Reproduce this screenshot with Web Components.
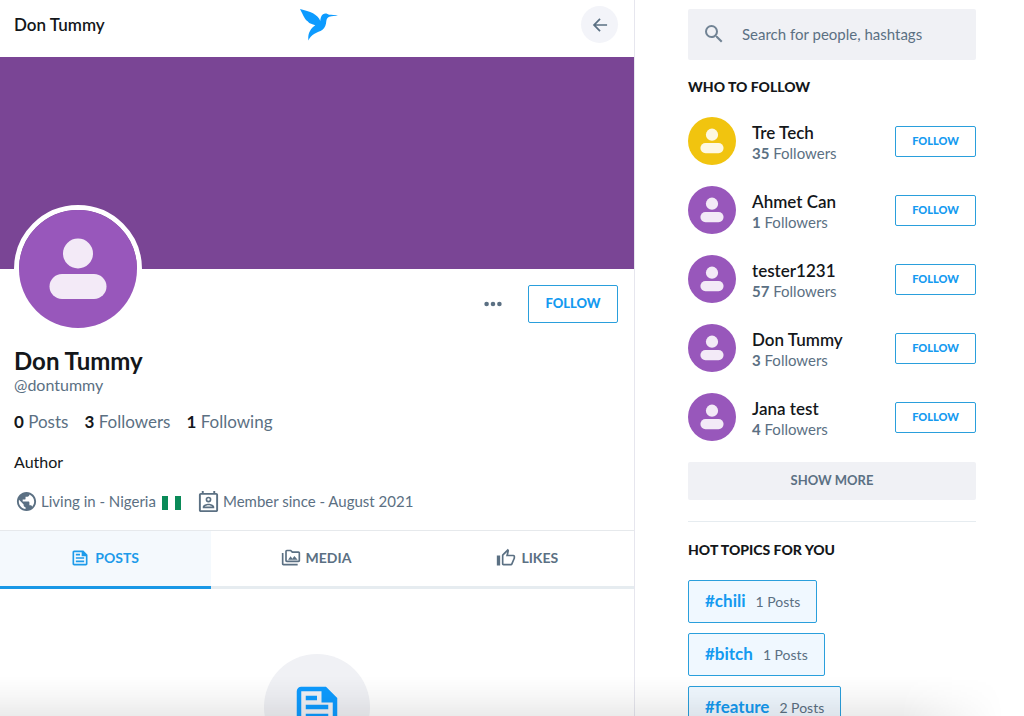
<!DOCTYPE html>
<html lang="en">
<head>
<meta charset="utf-8">
<title>Don Tummy</title>
<style>
  body { margin: 0; background: #fff; }
</style>
</head>
<body>
<social-app></social-app>

<script>
const PATHS = {
  back: '<path d="M20.500 11.100H7.200l5.600-5.700-1.500-1.400L3.400 12l7.900 8 1.500-1.400-5.600-5.700h13.300z"/>',
  search: '<path d="M15.500 14h-.79l-.28-.27A6.471 6.471 0 0 0 16 9.500 6.500 6.500 0 1 0 9.500 16c1.610 0 3.090-.59 4.230-1.570l.27.28v.79l5 4.990L20.490 19l-4.990-5zm-6 0C7.010 14 5 11.990 5 9.500S7.010 5 9.500 5 14 7.010 14 9.500 11.990 14 9.500 14z"/>',
  more: '<circle cx="5" cy="12" r="2.500"/><circle cx="12" cy="12" r="2.500"/><circle cx="19" cy="12" r="2.500"/>',
  globe: '<path d="M12 2C6.480 2 2 6.480 2 12s4.480 10 10 10 10-4.480 10-10S17.520 2 12 2zm-1 17.930c-3.950-.49-7-3.850-7-7.930 0-.62.08-1.210.21-1.790L9 15v1c0 1.100.9 2 2 2v1.930zm6.900-2.540c-.26-.81-1-1.390-1.900-1.390h-1v-3c0-.55-.45-1-1-1H8v-2h2c.55 0 1-.45 1-1V7h2c1.100 0 2-.9 2-2v-.41c2.930 1.190 5 4.060 5 7.410 0 2.080-.8 3.970-2.100 5.390z"/>',
  member: '<path d="M20 3h-1V1h-2v2H7V1H5v2H4c-1.100 0-2 .9-2 2v16c0 1.100.9 2 2 2h16c1.100 0 2-.9 2-2V5c0-1.100-.9-2-2-2zm0 18H4V5h16z"/><path d="M12 7a3 3 0 1 0 0 6 3 3 0 0 0 0-6zm0 4.300a1.300 1.300 0 1 1 0-2.600 1.300 1.300 0 0 1 0 2.600zM18 17.600c0-2.200-4-3.300-6-3.300s-6 1.100-6 3.300V19h12zm-9.900-.3c.6-.6 2.500-1.300 3.900-1.300s3.300.7 3.900 1.300z"/>',
  feed: '<path d="M16 3H5c-1.100 0-2 .9-2 2v14c0 1.100.9 2 2 2h14c1.100 0 2-.9 2-2V8l-5-5zm3 16H5V5h9v5h5v9zM7 17h10v-2H7v2zm5-10H7v2h5V7zm-5 6h10v-2H7v2z"/>',
  media: '<path d="M3 6H1v13c0 1.100.9 2 2 2h17v-2H3V6z"/><path d="M21 4h-7l-2-2H7c-1.100 0-1.990.9-1.990 2L5 15c0 1.100.9 2 2 2h14c1.100 0 2-.9 2-2V6c0-1.100-.9-2-2-2zm0 11H7V4h4.170l2 2H21v9z"/><path d="M8.500 14l3-4 2.200 2.800L16 9.500l4 4.500z"/>',
  like: '<path d="M9 21h9c.83 0 1.540-.5 1.840-1.220l3.020-7.050c.09-.23.14-.47.14-.73v-2c0-1.100-.9-2-2-2h-6.310l.95-4.570.03-.32c0-.41-.17-.79-.44-1.060L14.170 1 7.580 7.590C7.220 7.950 7 8.450 7 9v10c0 1.100.9 2 2 2zM9 9l4.340-4.340L12 10h9v2l-3 7H9V9zM1 9h4v12H1z"/>'
};

function define(name, template, setup) {
  const source = document.createElement('template');
  source.innerHTML = template;
  customElements.define(name, class extends HTMLElement {
    constructor() {
      super();
      this.attachShadow({ mode: 'open' }).append(source.content.cloneNode(true));
    }
    connectedCallback() {
      if (setup) setup(this, this.shadowRoot);
    }
  });
}

define('ui-icon', `
  <style>
    :host { display: block; flex: none; width: var(--icon-size, 24px); height: var(--icon-size, 24px); }
    svg { display: block; width: 100%; height: 100%; fill: currentColor; }
  </style>
  <svg viewBox="0 0 24 24" aria-hidden="true"></svg>`,
  (host, root) => { root.querySelector('svg').innerHTML = PATHS[host.getAttribute('name')]; });

define('bird-logo', `
  <style>
    :host { display: block; }
    a, svg { display: block; }
  </style>
  <a href="#" aria-label="Home">
    <svg width="44" height="32" viewBox="-6 0 44 32" fill="#0d9bff">
      <path d="M0 0C5 1.600 9.500 2 13 4.300c3.600 2.300 6.300 4.600 7.300 7.600.2-3 1.300-7.300 5.200-7.400 1.500 0 2.500.6 3.400 1.300 3 0 6 .2 9.300 1-3 .3-6 .3-8.900 1-2 .7-2.700 2.300-3 4.500-.3 3.700-1.200 6.400-3.800 8.500-2.500 2-5.500 2.300-8 4-2.700 1.700-4.600 3.500-6.100 6.600-.8-6.300 1.600-11.600 6.900-15.200-3-.7-5.700-1.400-7.500-3.600 .3-.2-.6-.4-1-.8C4.300 9.300 3.200 6.200 0 0z"/>
    </svg>
  </a>`);

define('user-avatar', `
  <style>
    :host { display: block; flex: none; width: 48px; height: 48px; color: #9857bb; }
    :host([tone="yellow"]) { color: #f1c40f; }
    :host([size="large"]) { width: 118px; height: 118px; border: 5px solid #fff; border-radius: 50%; }
    svg { display: block; width: 100%; height: 100%; }
  </style>
  <svg viewBox="0 0 118 118" role="img" aria-label="Profile picture">
    <circle cx="59" cy="59" r="59" fill="currentColor"/>
    <g fill="#fff" fill-opacity=".88">
      <circle cx="59" cy="43.500" r="15"/>
      <rect x="30.500" y="64" width="57" height="25" rx="12.500"/>
    </g>
  </svg>`);

define('follow-button', `
  <style>
    :host { display: block; flex: none; }
    button {
      display: block; box-sizing: border-box; width: 81px; height: 31px; padding: 0 0 1px;
      border: 1px solid #2a9fdc; border-radius: 2px; background: #fff; color: #149af0;
      font: 900 11px/16px Lato, sans-serif; cursor: pointer;
    }
    :host([size="large"]) button { width: 90px; height: 38px; font-size: 13px; padding-bottom: 2px; }
  </style>
  <button type="button">FOLLOW</button>`);

define('page-header', `
  <style>
    :host {
      display: grid; grid-template-columns: 1fr auto 1fr; align-items: center;
      box-sizing: border-box; height: 57px; padding: 0 16px 8px 14px; background: #fff;
    }
    h2 { margin: 0; font: 600 17px/24px Lato, sans-serif; }
    button {
      justify-self: end; display: grid; place-items: center; width: 37px; height: 37px; padding: 0;
      border: 0; border-radius: 50%; background: #f3f4f9; color: #5b7083; cursor: pointer;
      --icon-size: 20px;
    }
  </style>
  <h2><slot></slot></h2>
  <bird-logo></bird-logo>
  <button type="button" aria-label="Back"><ui-icon name="back"></ui-icon></button>`);

define('profile-card', `
  <style>
    :host { display: block; }
    .cover { height: 212px; background: #7a4595; }
    .body { padding: 0 16px 17px 14px; }
    .top { display: flex; align-items: flex-start; justify-content: space-between; }
    user-avatar { margin-top: -64px; position: relative; }
    .actions { display: flex; align-items: center; gap: 24px; padding-top: 16px; }
    .more { display: block; padding: 0; border: 0; background: none; color: #5b7083; cursor: pointer; --icon-size: 22px; }
    h1 { margin: 12px 0 0; font: 700 24px/32px Lato, sans-serif; }
    .handle { margin: 0; font-size: 16px; line-height: 16px; color: #5b7083; }
    .stats { display: flex; gap: 16px; margin: 17px 0 0; padding: 0; list-style: none; font-size: 17px; line-height: 24px; }
    .stats a { color: #5b7083; text-decoration: none; }
    .stats strong { color: #14171a; }
    .bio { margin: 16px 0 0; font-size: 16px; line-height: 24px; }
    .facts { display: flex; align-items: center; gap: 16px; margin-top: 15px; font-size: 15px; line-height: 24px; color: #5b7083; --icon-size: 23px; }
    .fact { display: flex; align-items: center; gap: 3px; }
    .fact:first-child { padding-left: 1px; }
    .flag { width: 19px; height: 14px; margin: 4px 0 0 3px; background: linear-gradient(90deg, #0a8a58 33%, #fff 33% 67%, #0a8a58 67%); }
  </style>
  <div class="cover"></div>
  <div class="body">
    <div class="top">
      <user-avatar size="large"></user-avatar>
      <div class="actions">
        <button class="more" type="button" aria-label="More"><ui-icon name="more"></ui-icon></button>
        <follow-button size="large"></follow-button>
      </div>
    </div>
    <h1>Don Tummy</h1>
    <p class="handle">@dontummy</p>
    <ul class="stats">
      <li><a href="#"><strong>0</strong> Posts</a></li>
      <li><a href="#"><strong>3</strong> Followers</a></li>
      <li><a href="#"><strong>1</strong> Following</a></li>
    </ul>
    <p class="bio">Author</p>
    <div class="facts">
      <div class="fact"><ui-icon name="globe"></ui-icon><span>Living in - Nigeria</span><div class="flag" role="img" aria-label="Flag of Nigeria"></div></div>
      <div class="fact"><ui-icon name="member"></ui-icon><span>Member since - August 2021</span></div>
    </div>
  </div>`);

define('tab-item', `
  <style>
    :host { display: block; flex: 1; }
    button {
      display: flex; align-items: center; justify-content: center; gap: 5px; box-sizing: border-box;
      width: 100%; height: 58px; padding: 0 2px 2px 0; border: 0; border-bottom: 3px solid #e6ecf0;
      background: #fff; color: #5b7083; font: 700 14px/20px Lato, sans-serif; cursor: pointer;
      --icon-size: 20px;
    }
    :host([active]) button { background: #f4f9fd; border-color: #1a98e6; color: #1d9bea; }
  </style>
  <button type="button" role="tab"><ui-icon></ui-icon><span><slot></slot></span></button>`,
  (host, root) => {
    const icon = root.querySelector('ui-icon');
    const fresh = document.createElement('ui-icon');
    fresh.setAttribute('name', host.getAttribute('icon'));
    icon.replaceWith(fresh);
    root.querySelector('button').setAttribute('aria-selected', host.hasAttribute('active'));
  });

define('profile-tabs', `
  <style>
    :host { display: flex; border-top: 1px solid #e6e9ec; }
  </style>
  <tab-item icon="feed" active>POSTS</tab-item>
  <tab-item icon="media">MEDIA</tab-item>
  <tab-item icon="like">LIKES</tab-item>`,
  host => host.setAttribute('role', 'tablist'));

define('empty-posts', `
  <style>
    :host { display: flex; justify-content: center; padding-top: 65px; }
    .disc {
      display: grid; place-items: center; width: 106px; height: 106px; border-radius: 50%;
      background: #f0f1f5; color: #0d9bff; --icon-size: 54px;
    }
  </style>
  <div class="disc"><ui-icon name="feed"></ui-icon></div>`);

define('search-box', `
  <style>
    :host { display: block; }
    label {
      display: flex; align-items: center; gap: 16px; box-sizing: border-box; height: 51px; padding: 0 52px 2px 14px;
      border-radius: 2px; background: #f0f1f5; color: #718394;
    }
    input {
      flex: 1; min-width: 0; padding: 0; border: 0; outline: 0; background: none;
      font: 400 15px/24px Lato, sans-serif; color: #14171a;
    }
    input::placeholder { color: #5b7083; opacity: 1; }
  </style>
  <label><ui-icon name="search"></ui-icon><input type="text" aria-label="Search" placeholder="Search for people, hashtags"></label>`);

define('follow-suggestion', `
  <style>
    :host { display: flex; align-items: center; gap: 16px; }
    .text { flex: 1; min-width: 0; padding-top: 4px; }
    .name { display: block; font: 600 17px/20px Lato, sans-serif; color: #14171a; text-decoration: none; }
    .count { font-size: 15px; line-height: 20px; color: #5b7083; }
  </style>
  <user-avatar></user-avatar>
  <div class="text"><a class="name" href="#"></a><div class="count"><strong></strong> Followers</div></div>
  <follow-button></follow-button>`,
  (host, root) => {
    root.querySelector('.name').textContent = host.getAttribute('name');
    root.querySelector('strong').textContent = host.getAttribute('followers');
    if (host.hasAttribute('tone')) root.querySelector('user-avatar').setAttribute('tone', host.getAttribute('tone'));
  });

define('side-section', `
  <style>
    :host { display: block; }
    h3 { margin: 0; font: 900 14px/20px Lato, sans-serif; }
  </style>
  <h3><slot name="title"></slot></h3>
  <slot></slot>`);

define('topic-chip', `
  <style>
    :host { display: block; }
    a {
      display: flex; align-items: baseline; gap: 10px; padding: 11px 16px;
      border: 1px solid #2a9fdc; border-radius: 2px; background: #f0f8ff; text-decoration: none;
      font-size: 14px; line-height: 18px; color: #5b7083;
    }
    strong { font-size: 17px; color: #149af0; }
  </style>
  <a href="#"><strong><slot></slot></strong><span></span></a>`,
  (host, root) => { root.querySelector('span').textContent = host.getAttribute('posts') + ' Posts'; });

define('side-bar', `
  <style>
    :host { display: block; padding-top: 9px; }
    side-section { margin-top: 17px; }
    .people { display: grid; gap: 21px; margin-top: 20px; }
    .show-more {
      display: block; width: 100%; height: 38px; margin-top: 21px; padding: 0 0 2px; border: 0; border-radius: 2px;
      background: #f0f1f5; color: #5b7083; font: 700 13px/20px Lato, sans-serif; cursor: pointer;
    }
    hr { height: 1px; margin: 21px 0 18px; border: 0; background: #e6ecf0; }
    .topics { display: flex; flex-direction: column; align-items: flex-start; gap: 10px; margin-top: 20px; }
  </style>
  <search-box></search-box>
  <side-section>
    <span slot="title">WHO TO FOLLOW</span>
    <div class="people">
      <follow-suggestion name="Tre Tech" followers="35" tone="yellow"></follow-suggestion>
      <follow-suggestion name="Ahmet Can" followers="1"></follow-suggestion>
      <follow-suggestion name="tester1231" followers="57"></follow-suggestion>
      <follow-suggestion name="Don Tummy" followers="3"></follow-suggestion>
      <follow-suggestion name="Jana test" followers="4"></follow-suggestion>
    </div>
    <button class="show-more" type="button">SHOW MORE</button>
  </side-section>
  <hr>
  <side-section>
    <span slot="title">HOT TOPICS FOR YOU</span>
    <div class="topics">
      <topic-chip posts="1">#chili</topic-chip>
      <topic-chip posts="1">#bitch</topic-chip>
      <topic-chip posts="2">#feature</topic-chip>
    </div>
  </side-section>`);

define('social-app', `
  <style>
    :host {
      display: flex; align-items: stretch; height: 100vh; overflow: hidden;
      font-family: Lato, sans-serif; color: #14171a;
    }
    main { flex: 1; min-width: 0; border-right: 1px solid #e6e6ee; }
    side-bar { flex: none; width: 288px; margin: 0 48px 0 53px; }
    .shade {
      position: fixed; inset: auto 0 0 0; height: 40px; pointer-events: none;
      background: linear-gradient(rgba(0,0,0,0), rgba(0,0,0,.03) 50%, rgba(0,0,0,.08));
      mask-image: linear-gradient(90deg, #000 88%, transparent 98%);
    }
  </style>
  <main>
    <page-header>Don Tummy</page-header>
    <profile-card></profile-card>
    <profile-tabs></profile-tabs>
    <empty-posts></empty-posts>
  </main>
  <side-bar></side-bar>
  <div class="shade"></div>`);
</script>
</body>
</html>
